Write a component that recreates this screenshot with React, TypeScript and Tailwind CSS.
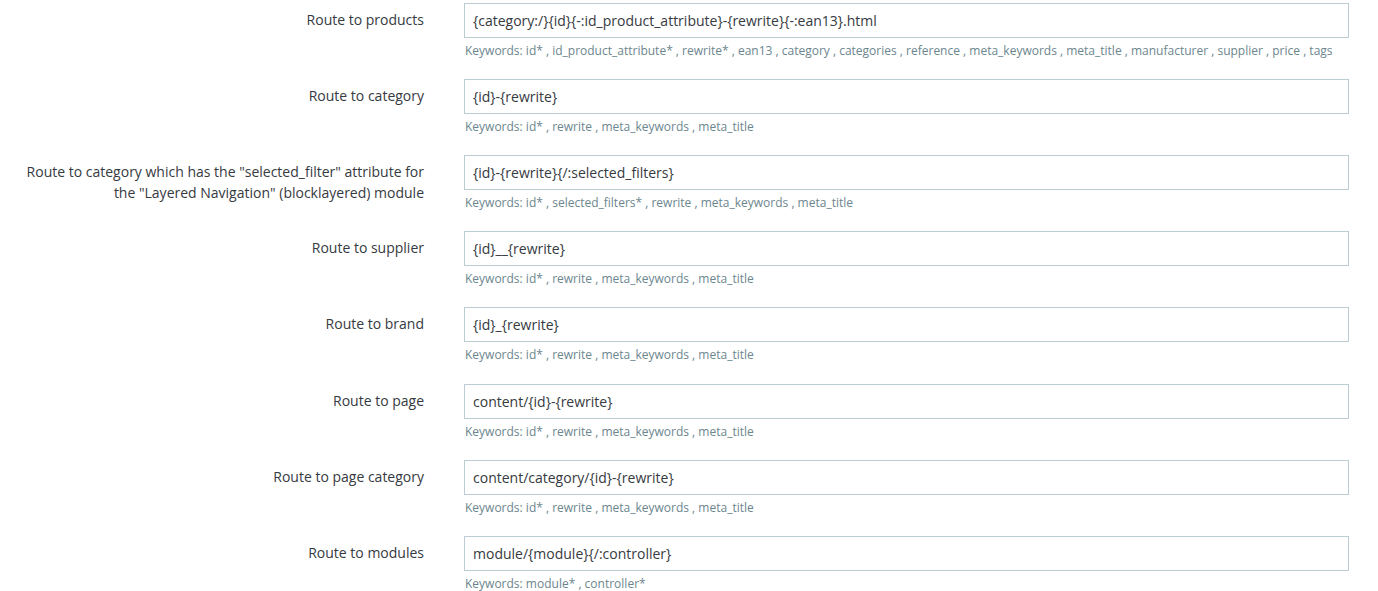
const rows: { label: string[]; value: string; keywords: string }[] = [
  {
    label: ["Route to products"],
    value: "{category:/}{id}{-:id_product_attribute}-{rewrite}{-:ean13}.html",
    keywords:
      "id* , id_product_attribute* , rewrite* , ean13 , category , categories , reference , meta_keywords , meta_title , manufacturer , supplier , price , tags",
  },
  { label: ["Route to category"], value: "{id}-{rewrite}", keywords: "id* , rewrite , meta_keywords , meta_title" },
  {
    label: ['Route to category which has the "selected_filter" attribute for', 'the "Layered Navigation" (blocklayered) module'],
    value: "{id}-{rewrite}{/:selected_filters}",
    keywords: "id* , selected_filters* , rewrite , meta_keywords , meta_title",
  },
  { label: ["Route to supplier"], value: "{id}__{rewrite}", keywords: "id* , rewrite , meta_keywords , meta_title" },
  { label: ["Route to brand"], value: "{id}_{rewrite}", keywords: "id* , rewrite , meta_keywords , meta_title" },
  { label: ["Route to page"], value: "content/{id}-{rewrite}", keywords: "id* , rewrite , meta_keywords , meta_title" },
  {
    label: ["Route to page category"],
    value: "content/category/{id}-{rewrite}",
    keywords: "id* , rewrite , meta_keywords , meta_title",
  },
  { label: ["Route to modules"], value: "module/{module}{/:controller}", keywords: "module* , controller*" },
];

export default function App() {
  return (
    <div
      className="w-[1378px] h-[591px] overflow-hidden bg-white pt-[3px]"
      style={{ fontFamily: '"Open Sans", "Noto Sans", sans-serif' }}
    >
      {rows.map((r, i) => (
        <div key={i} className={`flex ${i === 4 ? "h-[77px]" : "h-[76px]"}`}>
          <div className="w-[464px] pr-[40px] pt-[6px] text-right text-[14px] leading-[21px] text-[#363a41]">
            {r.label.map((l, j) => (
              <div key={j}>{l}</div>
            ))}
          </div>
          <div className="w-[885px]">
            <div className="h-[35px] border border-[#bbcdd2] bg-white pl-[8px] flex items-center text-[14px] text-[#363a41]">
              {r.value}
            </div>
            <div className="mt-[4px] pl-[1px] text-[12px] leading-[17px] text-[#6c868e]">Keywords: {r.keywords}</div>
          </div>
        </div>
      ))}
    </div>
  );
}
